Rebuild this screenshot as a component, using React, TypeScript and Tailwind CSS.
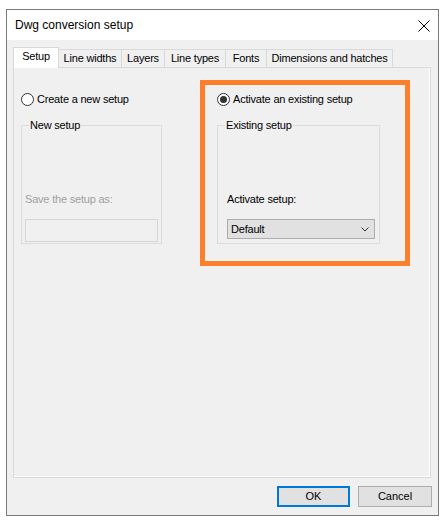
const FONT = "font-['Liberation_Sans',Arial,sans-serif]";

function Radio({ checked, label }: { checked?: boolean; label: string }) {
  return (
    <div className="flex items-center h-[14px]">
      <span className="w-[13px] h-[13px] rounded-full border border-[#333] bg-white flex items-center justify-center">
        {checked && <span className="w-[7px] h-[7px] rounded-full bg-[#333]" />}
      </span>
      <span className="ml-[3px] text-[11px] leading-[13px] tracking-[-0.2px] text-black">{label}</span>
    </div>
  );
}

function GroupBox({
  title,
  className,
  children,
}: {
  title: string;
  className: string;
  children: React.ReactNode;
}) {
  return (
    <div className={`relative border border-[#dcdcdc] h-[119px] flex flex-col justify-end ${className}`}>
      <span className="absolute left-[7px] top-[-7px] bg-[#f0f0f0] px-px text-[11px] leading-[13px] tracking-[-0.2px] text-black">
        {title}
      </span>
      {children}
    </div>
  );
}

const tabs = [
  { name: "Line widths", w: "w-[64px]" },
  { name: "Layers", w: "w-[44px]" },
  { name: "Line types", w: "w-[62px]" },
  { name: "Fonts", w: "w-[42px]" },
  { name: "Dimensions and hatches", w: "w-[127px]" },
];

export default function App() {
  return (
    <div className={`min-h-[527px] bg-white pt-[9px] pl-[6px] ${FONT}`}>
      <div className="w-[433px] h-[507px] border border-[#7a7a7a] flex flex-col">
        {/* title bar */}
        <div className="h-[30px] bg-white flex items-center justify-between pl-[8px] pr-[8px]">
          <span className="text-[12px] text-black">Dwg conversion setup</span>
          <svg width="12" height="12" viewBox="0 0 12 12" className="mt-px">
            <path d="M0.5 0.5L11.5 11.5M11.5 0.5L0.5 11.5" stroke="#000" strokeWidth="1" fill="none" />
          </svg>
        </div>

        <div className="flex-1 bg-[#f0f0f0] pt-[7px] pl-[6px] pr-[7px] pb-[8px] flex flex-col">
          {/* tabs */}
          <div className="h-[21px] -mb-px flex items-end relative z-10">
            <div className="h-[21px] w-[46px] bg-white border border-b-0 border-[#d9d9d9] flex items-start justify-center pt-[2px] text-[11px] leading-[13px] tracking-[-0.2px] text-black">
              Setup
            </div>
            {tabs.map((t) => (
              <div
                key={t.name}
                className={`h-[19px] ${t.w} -ml-px border border-[#d9d9d9] bg-[#f0f0f0] flex items-center justify-center text-[11px] leading-[13px] tracking-[-0.2px] text-black`}
              >
                {t.name}
              </div>
            ))}
          </div>

          {/* panel */}
          <div className="relative flex-1 border border-[#d9d9d9] bg-[#f0f0f0] shadow-[inset_-1px_-1px_0_#ffffff]">
            <div className="flex pl-[7px] pt-[24px]">
              <div className="w-[141px] flex flex-col">
                <Radio label="Create a new setup" />
                <GroupBox title="New setup" className="mt-[19px] px-[3px] pb-px">
                  <span className="text-[11px] leading-[13px] tracking-[-0.2px] text-[#a0a0a0] mb-[13px]">
                    Save the setup as:
                  </span>
                  <div className="h-[23px] border border-[#d6d6d6] bg-[#f0f0f0]" />
                </GroupBox>
              </div>

              <div className="w-[163px] ml-[55px] flex flex-col">
                <Radio checked label="Activate an existing setup" />
                <GroupBox title="Existing setup" className="mt-[19px] pl-[9px] pr-[4px] pb-[4px]">
                  <span className="text-[11px] leading-[13px] tracking-[-0.2px] text-black mb-[13px]">
                    Activate setup:
                  </span>
                  <div className="h-[20px] border border-[#adadad] bg-[#e1e1e1] flex items-center justify-between pl-[3px] pr-[5px]">
                    <span className="text-[11px] leading-[13px] tracking-[-0.2px] text-black">Default</span>
                    <svg width="8" height="5" viewBox="0 0 8 5">
                      <path d="M0.5 0.5L4 4L7.5 0.5" stroke="#333" strokeWidth="1" fill="none" />
                    </svg>
                  </div>
                </GroupBox>
              </div>
            </div>

            {/* highlight annotation */}
            <div className="absolute left-[186px] top-[12px] w-[210px] h-[186px] border-[5px] border-[#fe7f2a] pointer-events-none" />
          </div>

          {/* buttons */}
          <div className="mt-[8px] -mr-px flex justify-end gap-[8px]">
            <button className="w-[73px] h-[21px] border-2 border-[#0078d7] bg-[#e1e1e1] text-[11px] leading-[13px] text-black">
              OK
            </button>
            <button className="w-[74px] h-[21px] border border-[#adadad] bg-[#e1e1e1] text-[11px] leading-[13px] text-black">
              Cancel
            </button>
          </div>
        </div>
      </div>
    </div>
  );
}
